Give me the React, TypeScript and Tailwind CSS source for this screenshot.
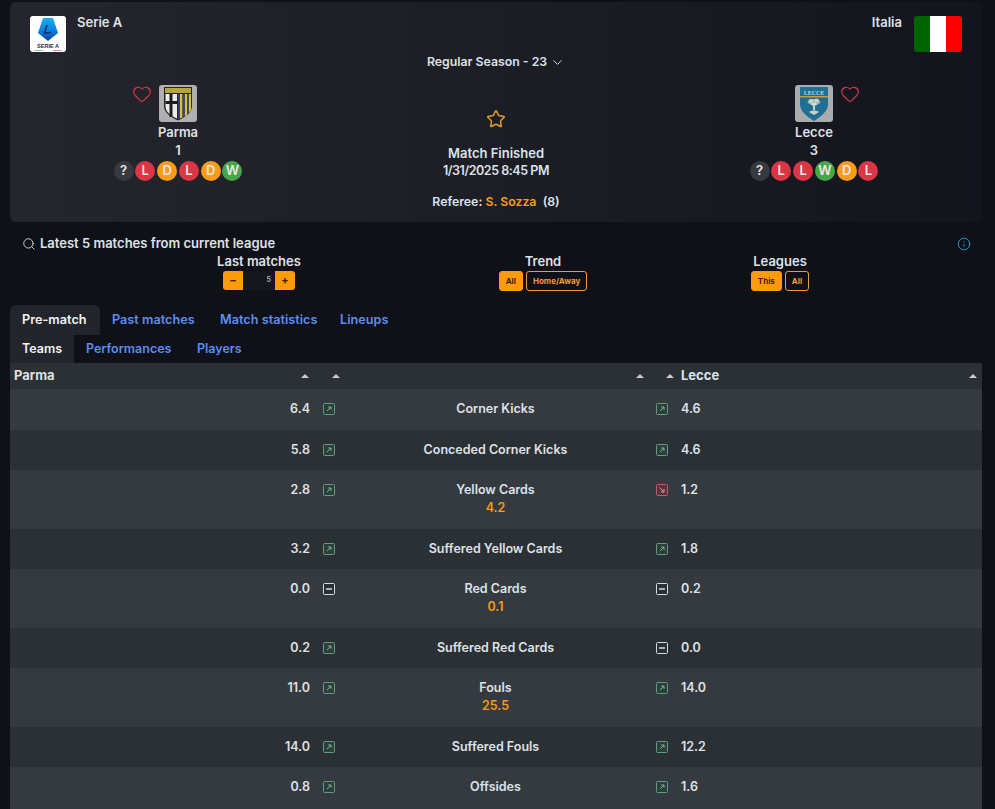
import { ChevronDown, Heart, Info, Search, Star } from "lucide-react";

const font = "font-['Inter','Liberation_Sans',sans-serif]";

const Form = ({ items }: { items: string[] }) => (
  <div className="flex gap-[1.8px] mt-[2px]">
    {items.map((r, i) => (
      <div
        key={i}
        className={
          "w-5 h-5 rounded-full flex items-center justify-center text-[13px] font-semibold text-[#f3e4e4] " +
          (r === "L" ? "bg-[#dc3545]" : r === "D" ? "bg-[#f79c16]" : r === "W" ? "bg-[#45a749]" : "bg-[#343a40]")
        }
      >
        {r}
      </div>
    ))}
  </div>
);

const SerieA = () => (
  <div className="w-9 h-9 rounded-[3px] bg-white overflow-hidden">
    <svg viewBox="0 0 36 36" width="36" height="36">
      <defs>
        <linearGradient id="sa" x1="0" y1="0" x2="0" y2="1">
          <stop offset="0" stopColor="#1ab2ee" />
          <stop offset="0.6" stopColor="#0a78dc" />
          <stop offset="1" stopColor="#0b3f9c" />
        </linearGradient>
      </defs>
      <path d="M13 2 H23 L28 17 L18 25 L8 17 Z" fill="url(#sa)" />
      <path d="M17 9 L14.5 17 L21 16.5" fill="none" stroke="#0b3270" strokeWidth="1.6" />
      <text x="18" y="31.5" textAnchor="middle" fontSize="5.5" fontWeight="800" fill="#2a2a3a" fontFamily="Liberation Sans">SERIE A</text>
      <path d="M4 34.5 H13" stroke="#8ccf9a" strokeWidth="1" />
      <path d="M23 34.5 H32" stroke="#e58a9a" strokeWidth="1" />
    </svg>
  </div>
);

const ParmaLogo = () => (
  <div className="w-[38px] h-[37px] rounded-[3px] bg-[#b0b0b3] overflow-hidden">
    <svg viewBox="0 0 38 37" width="38" height="37">
      <path d="M5 2 H33 V21 C33 28 26 32 19 35.5 C12 32 5 28 5 21 Z" fill="#26262a" />
      <rect x="6" y="3" width="26" height="5" fill="#b5a53c" />
      <path d="M6.5 9 H18 V33.5 C12 31 6.5 27 6.5 21 Z" fill="#ececec" />
      <rect x="10.5" y="9" width="3" height="23" fill="#1d1d1d" />
      <rect x="6.5" y="16" width="11.5" height="3" fill="#1d1d1d" />
      <path d="M19 9 H21 V33.5 L19 34.5 Z" fill="#2e4274" />
      <path d="M21 9 H23.5 V32.5 L21 33.5 Z M26 9 H28 V30 L26 31.5 Z M30 9 H32 V25 L30 28 Z" fill="#dcc12f" />
      <path d="M23.5 9 H26 V31.5 L23.5 32.5 Z M28 9 H30 V28 L28 30 Z" fill="#3a4a6a" />
    </svg>
  </div>
);

const LecceLogo = () => (
  <div className="w-[38px] h-[37px] rounded-[3px] bg-[#a9abad] overflow-hidden">
    <svg viewBox="0 0 38 37" width="38" height="37">
      <path d="M5 2 H33 V19 C33 27 25 32 19 36 C13 32 5 27 5 19 Z" fill="#1e6f92" />
      <rect x="5" y="11" width="28" height="1.4" fill="#cf9b43" />
      <text x="19" y="9.5" textAnchor="middle" fontSize="6" fill="#b8d6e2" fontFamily="Liberation Serif">LECCE</text>
      <path d="M19 25 V19" stroke="#c7cfc7" strokeWidth="2" fill="none" />
      <ellipse cx="19" cy="17" rx="6.5" ry="3" fill="#9fb0aa" />
      <ellipse cx="16" cy="16" rx="2.5" ry="2" fill="#c9d2c8" />
      <ellipse cx="21.5" cy="15.5" rx="2.5" ry="2" fill="#c9d2c8" />
      <ellipse cx="19" cy="19" rx="3" ry="1.6" fill="#d3dad1" />
      <path d="M14 27 C17 25 21 25 24 27 L19 30 Z" fill="#c9d2c8" />
    </svg>
  </div>
);

const Flag = () => (
  <div className="w-12 h-9 rounded-[3px] overflow-hidden flex">
    <div className="flex-1 bg-[#006400]" />
    <div className="flex-1 bg-white" />
    <div className="flex-1 bg-[#fe0000]" />
  </div>
);

const Team = ({ name, score, form, heart, logo }: { name: string; score: string; form: string[]; heart: "left" | "right"; logo: React.ReactNode }) => (
  <div className="flex flex-col items-center w-[132px] text-[13px] font-semibold text-[#dee2e6]">
    <div className="relative">
      {logo}
      <Heart
        size={20}
        strokeWidth={1.4}
        className={"absolute -top-px text-[#cf3a4c] " + (heart === "left" ? "-left-[27px]" : "-right-[27px]")}
      />
    </div>
    <div className="leading-[20px]">{name}</div>
    <div className="leading-[17px]">{score}</div>
    <Form items={form} />
  </div>
);

const Pill = ({ label, on }: { label: string; on?: boolean }) => (
  <div
    className={
      "h-5 px-[6px] rounded-[3px] border flex items-center text-[8px] font-bold " +
      (on ? "bg-[#ff9a0a] border-[#ff9a0a] text-[#3a2304]" : "border-[#e89a40] text-[#ef9a3a]")
    }
  >
    {label}
  </div>
);

const Caret = () => <span className="inline-block w-0 h-0 border-x-[4px] border-x-transparent border-b-[4px] border-b-[#c8ccd0]" />;

const Trend = ({ t }: { t: "up" | "down" | "flat" }) => {
  if (t === "flat")
    return (
      <svg width="12" height="12" viewBox="0 0 12 12" className="block">
        <rect x="0.5" y="0.5" width="11" height="11" rx="1" fill="#2b3035" stroke="#d5dde3" />
        <path d="M3 6 H9" stroke="#e4e9ec" strokeWidth="1.4" />
      </svg>
    );
  if (t === "down")
    return (
      <svg width="12" height="12" viewBox="0 0 12 12" className="block">
        <rect x="0.5" y="0.5" width="11" height="11" rx="1" fill="#54343e" stroke="#b85c69" />
        <path d="M3.5 3.5 L8 8 M8 5 V8 H5" stroke="#e88d9b" strokeWidth="1" fill="none" />
      </svg>
    );
  return (
    <svg width="12" height="12" viewBox="0 0 12 12" className="block">
      <rect x="0.5" y="0.5" width="11" height="11" rx="1" fill="#2a4039" stroke="#649880" />
      <path d="M4 8 L8 4 M5.2 4 H8 V6.8" stroke="#8fb8a3" strokeWidth="0.9" fill="none" />
    </svg>
  );
};

type Stat = { h: string; a: string; label: string; ti: "up" | "down" | "flat"; ta: "up" | "down" | "flat"; total?: string };

const stats: Stat[] = [
  { h: "6.4", a: "4.6", label: "Corner Kicks", ti: "up", ta: "up" },
  { h: "5.8", a: "4.6", label: "Conceded Corner Kicks", ti: "up", ta: "up" },
  { h: "2.8", a: "1.2", label: "Yellow Cards", ti: "up", ta: "down", total: "4.2" },
  { h: "3.2", a: "1.8", label: "Suffered Yellow Cards", ti: "up", ta: "up" },
  { h: "0.0", a: "0.2", label: "Red Cards", ti: "flat", ta: "flat", total: "0.1" },
  { h: "0.2", a: "0.0", label: "Suffered Red Cards", ti: "up", ta: "flat" },
  { h: "11.0", a: "14.0", label: "Fouls", ti: "up", ta: "up", total: "25.5" },
  { h: "14.0", a: "12.2", label: "Suffered Fouls", ti: "up", ta: "up" },
  { h: "0.8", a: "1.6", label: "Offsides", ti: "up", ta: "up" },
];

const cols = "grid grid-cols-[300px_35px_301px_32px_304px]";

export default function App() {
  return (
    <div className={"w-[995px] h-[809px] overflow-hidden bg-[#0f1018] " + font}>
      <div className="ml-[10px] w-[972px] pt-[2px]">
        <div className="h-[220px] rounded-[6px] bg-gradient-to-r from-[#25262d] to-[#13141d] px-5 pt-[14px]">
          <div className="flex justify-between">
            <div className="flex">
              <SerieA />
              <div className="ml-[11px] text-[13px] font-semibold text-[#dee2e6] leading-[13px]">Serie A</div>
            </div>
            <div className="flex">
              <div className="mr-[12px] text-[13px] font-semibold text-[#dee2e6] leading-[13px]">Italia</div>
              <Flag />
            </div>
          </div>
          <div className="flex flex-col items-center mt-[2px] text-[12.3px] font-semibold text-[#dee2e6]">
            <div className="flex items-center gap-[3px] leading-[16px]">
              Regular Season - 23 <ChevronDown size={15} strokeWidth={1.5} />
            </div>
          </div>
          <div className="flex justify-between mt-[15px] ml-[82px] mr-[82px]">
            <Team name="Parma" score="1" form={["?", "L", "D", "L", "D", "W"]} heart="left" logo={<ParmaLogo />} />
            <div className="flex flex-col items-center text-[13px] font-semibold text-[#dee2e6]">
              <Star size={20} strokeWidth={1.8} className="text-[#e09a25] mt-[24px]" />
              <div className="mt-[15px] leading-[18px]">Match Finished</div>
              <div className="leading-[18px] text-[12.5px] tracking-[-0.45px]">1/31/2025 8:45 PM</div>
              <div className="mt-[13px] leading-[18px] whitespace-pre text-[12.3px]">
                Referee: <span className="text-[#f79c16]">S. Sozza</span>{"  "}(8)
              </div>
            </div>
            <Team name="Lecce" score="3" form={["?", "L", "L", "W", "D", "L"]} heart="right" logo={<LecceLogo />} />
          </div>
        </div>

        <div className="flex items-center justify-between h-[17px] mt-[13px] pl-[12px] pr-[11px] text-[13px] font-semibold text-[#dee2e6]">
          <div className="flex items-center gap-[4px]">
            <Search size={14} strokeWidth={1.5} />
            Latest 5 matches from current league
          </div>
          <Info size={14} strokeWidth={1.5} className="text-[#2f9fd8]" />
        </div>

        <div className="grid grid-cols-[238px_330px_144px] pl-[130px] h-[37px] text-[13px] font-semibold text-[#dee2e6]">
          <div className="flex flex-col items-center">
            <div className="leading-[18px]">Last matches</div>
            <div className="flex h-[19px] mt-[1px] text-[11px]">
              <div className="w-5 rounded-l-[3px] bg-[#ff9a0a] text-[#3a2304] flex items-center justify-center font-bold">−</div>
              <div className="w-[32px] bg-[#16171e] text-[#adb5bd] flex items-center justify-end pr-1 text-[7px]">5</div>
              <div className="w-5 rounded-r-[3px] bg-[#ff9a0a] text-[#3a2304] flex items-center justify-center font-bold">+</div>
            </div>
          </div>
          <div className="flex flex-col items-center">
            <div className="leading-[18px]">Trend</div>
            <div className="flex gap-[3px] mt-[1px]">
              <Pill label="All" on />
              <Pill label="Home/Away" />
            </div>
          </div>
          <div className="flex flex-col items-center">
            <div className="leading-[18px]">Leagues</div>
            <div className="flex gap-[3px] mt-[1px]">
              <Pill label="This" on />
              <Pill label="All" />
            </div>
          </div>
        </div>

        <div className="flex h-[30px] mt-[16px] text-[12.7px] font-semibold">
          <div className="w-[90px] pl-3 flex items-center rounded-t-[6px] bg-[#22252b] text-[#f1f3f5]">Pre-match</div>
          <div className="w-[108px] pl-3 flex items-center text-[#5b8def]">Past matches</div>
          <div className="w-[120px] pl-3 flex items-center text-[#5b8def]">Match statistics</div>
          <div className="pl-3 flex items-center text-[#5b8def]">Lineups</div>
        </div>
        <div className="flex h-[28px] text-[12.5px] font-semibold">
          <div className="w-[64px] pl-3 flex items-center bg-[#22252b] text-[#f1f3f5]">Teams</div>
          <div className="w-[111px] pl-3 flex items-center text-[#5b8def]">Performances</div>
          <div className="pl-3 flex items-center text-[#5b8def]">Players</div>
        </div>

        <div className={cols + " h-[26px] bg-[#2b3035] text-[13px] font-bold text-[#dee2e6] items-center"}>
          <div className="flex items-center justify-between pl-1 pr-[1px]">Parma<Caret /></div>
          <div className="flex justify-end pr-[5px]"><Caret /></div>
          <div className="flex justify-end pr-[2px]"><Caret /></div>
          <div className="flex justify-end pr-[4px]"><Caret /></div>
          <div className="flex items-center justify-between pl-[3px] pr-[5px]">Lecce<Caret /></div>
        </div>

        {stats.map((s, i) => (
          <div
            key={s.label}
            className={cols + " text-[12.5px] font-semibold text-[#dee2e6] pt-[11px] last:h-[42px] " + (i % 2 === 0 ? "bg-[#343a40] " : "bg-[#2b3035] ") + (s.total ? "h-[58.5px]" : "h-[40.5px]")}
          >
            <div className="text-right leading-[18px]">{s.h}</div>
            <div className="flex justify-center pt-[3px] pl-[2px]"><Trend t={s.ti} /></div>
            <div className="text-center leading-[18px]">
              <div>{s.label}</div>
              {s.total && <div className="text-[#f79c16]">{s.total}</div>}
            </div>
            <div className="flex justify-center pt-[3px]"><Trend t={s.ta} /></div>
            <div className="pl-[3px] leading-[18px]">{s.a}</div>
          </div>
        ))}
      </div>
    </div>
  );
}
